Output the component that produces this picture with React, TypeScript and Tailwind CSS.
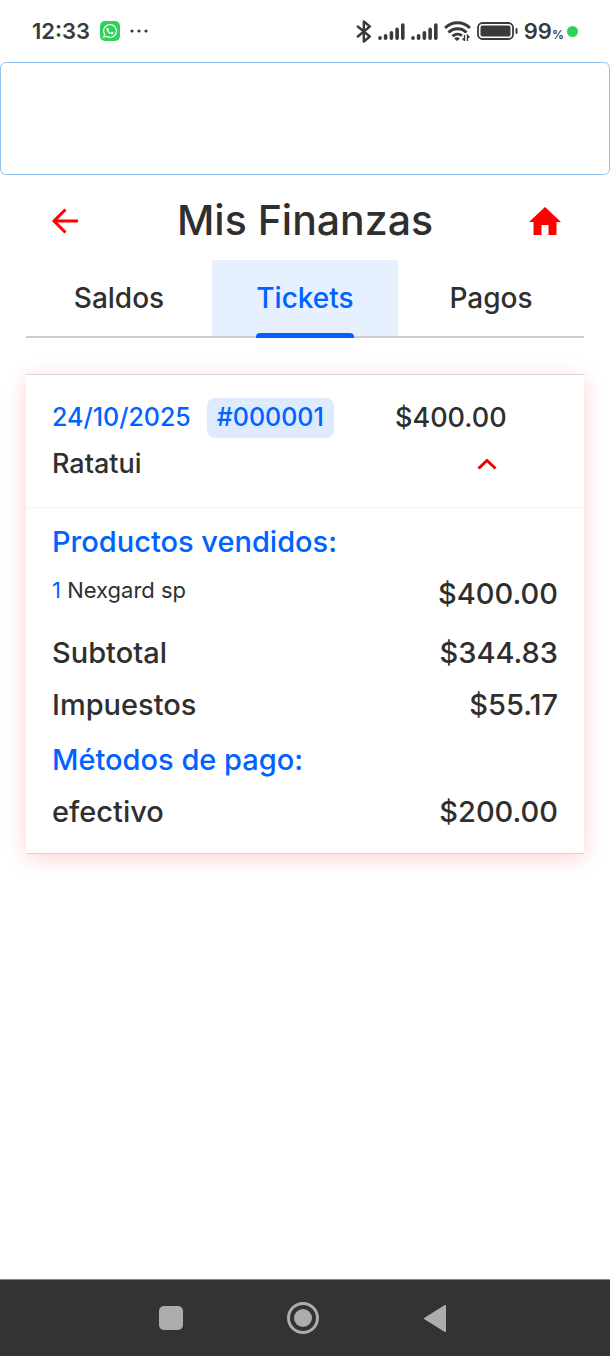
import { useState } from "react";
import { FaWhatsapp } from "react-icons/fa";

type Line = {
	label: string;
	amount: string;
};

const tabs = ["Saldos", "Tickets", "Pagos"];

const totals: Line[] = [
	{ label: "Subtotal", amount: "$344.83" },
	{ label: "Impuestos", amount: "$55.17" },
];

const payments: Line[] = [{ label: "efectivo", amount: "$200.00" }];

function SignalIcon() {
	return (
		<svg className="h-[18px] w-[27px]" viewBox="0 0 27 18" fill="none" stroke="currentColor" strokeWidth="3.6" strokeLinecap="round" aria-hidden="true">
			<path d="M2 16.2v-.4M7.6 16.2v-2.4M13.4 16.2v-5.4M19.1 16.2V7.4M24.8 16.2V3" />
		</svg>
	);
}

function StatusBar() {
	return (
		<div className="flex h-[62px] items-center justify-between px-8 text-[#3a3a3a]">
			<div className="flex items-center gap-[10px]">
				<span className="text-[22px] font-semibold">12:33</span>
				<span className="flex size-5 items-center justify-center rounded-[5px] bg-[#30d158] text-white">
					<FaWhatsapp className="size-4" />
				</span>
				<svg className="h-1 w-[18px]" viewBox="0 0 18 4" fill="currentColor" aria-hidden="true">
					<circle cx="2" cy="2" r="1.6" />
					<circle cx="9" cy="2" r="1.6" />
					<circle cx="16" cy="2" r="1.6" />
				</svg>
			</div>
			<div className="flex items-center gap-[6px]">
				<svg className="h-[23px] w-4" viewBox="0 0 16 23" fill="none" stroke="currentColor" strokeWidth="2.4" strokeLinejoin="round" strokeLinecap="round" aria-hidden="true">
					<path d="M1.8 6.5l12 10-6 5v-20l6 5-12 10" />
				</svg>
				<SignalIcon />
				<SignalIcon />
				<svg className="h-5 w-[27px]" viewBox="0 0 27 20" fill="none" stroke="currentColor" strokeWidth="3" aria-hidden="true">
					<path d="M1 7a17.5 17.5 0 0 1 25 0M4.5 11.5a12.5 12.5 0 0 1 18 0M8.5 15.2a7.5 7.5 0 0 1 9.5-.6" />
					<path d="M10 17.5a4.5 4.5 0 0 1 6 0L13 20z" fill="currentColor" stroke="none" />
					<path d="M20.5 14v5.5l-2-2M23.5 20v-5.5l2 2" strokeWidth="1.4" />
				</svg>
				<svg className="h-[18px] w-[41px]" viewBox="0 0 41 18" fill="none" aria-hidden="true">
					<rect x="1" y="1" width="35" height="16" rx="4.5" stroke="currentColor" strokeWidth="1.8" />
					<rect x="3.5" y="3.5" width="30" height="11" rx="2" fill="currentColor" />
					<rect x="38.5" y="6" width="2" height="6" rx="1" fill="currentColor" />
				</svg>
				<div className="flex items-center gap-[3px]">
					<span className="text-[22px] font-semibold">
						99<span className="text-xs">%</span>
					</span>
					<span className="size-[11px] rounded-full bg-[#30d158]" />
				</div>
			</div>
		</div>
	);
}

function DetailRow({ label, amount }: Line) {
	return (
		<div className="flex h-[52px] items-center justify-between">
			<span>{label}</span>
			<span>{amount}</span>
		</div>
	);
}

function TicketCard() {
	const [open, setOpen] = useState(true);

	return (
		<article className="border-y border-[#dcd4d4] bg-white shadow-[0_4px_20px_rgba(255,0,0,0.18)]">
			<div className="grid grid-cols-[1fr_163px] border-b border-[#f4f4f4] px-[26px] pt-[23px] pb-[17px] text-[27px] font-medium">
				<div className="flex h-10 items-center gap-4 text-[25px] text-[#0062ff]">
					<span>24/10/2025</span>
					<span className="flex h-10 items-center rounded-lg bg-[#deebff] px-[10px]">#000001</span>
				</div>
				<span className="flex h-10 items-center">$400.00</span>
				<span className="flex h-[52px] items-center">Ratatui</span>
				<button type="button" aria-expanded={open} aria-label="Ver detalle" onClick={() => setOpen(!open)} className="ml-20 flex h-[52px] w-6 items-center justify-center text-[#ee0000]">
					<svg className={open ? "h-3 w-5" : "h-3 w-5 rotate-180"} viewBox="0 0 20 12" fill="none" stroke="currentColor" strokeWidth="3" aria-hidden="true">
						<path d="M1.5 10.5L10 2.5l8.5 8" />
					</svg>
				</button>
			</div>
			{open && (
				<div className="px-[26px] pt-2 pb-[15px] text-[29px] font-medium">
					<h2 className="flex h-[52px] items-center text-[#0062ff]">Productos vendidos:</h2>
					<div className="mb-[7px] flex h-[52px] items-center justify-between">
						<span className="self-start text-[22px] leading-[44px] font-normal">
							<span className="text-[#0062ff]">1</span> Nexgard sp
						</span>
						<span>$400.00</span>
					</div>
					{totals.map((line) => (
						<DetailRow key={line.label} {...line} />
					))}
					<h2 className="mt-[3px] flex h-[52px] items-center text-[#0062ff]">Métodos de pago:</h2>
					{payments.map((line) => (
						<DetailRow key={line.label} {...line} />
					))}
				</div>
			)}
		</article>
	);
}

export default function App() {
	const [active, setActive] = useState("Tickets");

	return (
		<div className="flex min-h-screen flex-col bg-white font-['Inter',sans-serif] text-[#2f2f2f]">
			<StatusBar />
			<div className="h-[113px] rounded-md border border-[#8fc4f0]" />

			<main className="flex-1 px-[26px]">
				<header className="flex h-[85px] items-center justify-between px-[21px] pt-[7px]">
					<button type="button" aria-label="Regresar" className="flex size-9 items-center justify-center text-[#ff0000]">
						<svg className="size-7" viewBox="0 0 28 28" fill="none" stroke="currentColor" strokeWidth="3" aria-hidden="true">
							<path d="M27 14H3M14.5 2.5L3 14l11.5 11.5" />
						</svg>
					</button>
					<h1 className="text-[41px] font-medium">Mis Finanzas</h1>
					<a href="#" aria-label="Inicio" className="flex size-9 items-center justify-center text-[#ff0000]">
						<svg className="h-7 w-8" viewBox="0 0 32 28" fill="currentColor" aria-hidden="true">
							<path d="M16 0L0 15h4.5v13h8V18h7v10h8V15H32z" />
						</svg>
					</a>
				</header>

				<nav className="grid grid-cols-3 border-b-2 border-[#cbcbd0]">
					{tabs.map((tab) => (
						<button
							key={tab}
							type="button"
							onClick={() => setActive(tab)}
							className={
								tab === active
									? "relative flex h-[76px] items-center justify-center bg-[#e6f0ff] text-[28px] font-medium text-[#0062ff]"
									: "relative flex h-[76px] items-center justify-center text-[28px] font-medium"
							}
						>
							<span>{tab}</span>
							{tab === active && <span className="absolute -bottom-[2px] h-[5px] w-[98px] rounded-t bg-[#0062ff]" />}
						</button>
					))}
				</nav>

				<div className="pt-9 pb-10">
					<TicketCard />
				</div>
			</main>

			<footer className="flex h-[77px] items-center justify-center gap-[100px] border-t border-[#8a8a8a] bg-[#333333] pr-1 text-[#adadad]">
				<button type="button" aria-label="Recientes" className="flex size-8 items-center justify-center">
					<span className="size-6 rounded-[5px] bg-[#adadad]" />
				</button>
				<button type="button" aria-label="Inicio del teléfono" className="flex size-8 items-center justify-center rounded-full border-[3px] border-[#adadad]">
					<span className="size-[18px] rounded-full bg-[#adadad]" />
				</button>
				<button type="button" aria-label="Atrás" className="flex size-8 items-center justify-center">
					<svg className="h-[27px] w-[22px]" viewBox="0 0 22 27" fill="currentColor" stroke="currentColor" strokeWidth="2" strokeLinejoin="round" aria-hidden="true">
						<path d="M1 13.5L21 1v25z" />
					</svg>
				</button>
			</footer>
		</div>
	);
}
